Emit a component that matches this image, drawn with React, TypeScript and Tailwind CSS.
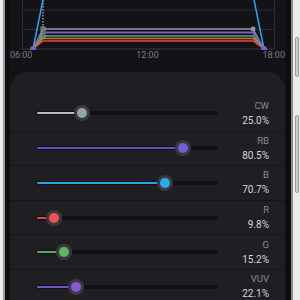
import React from 'react'

type Channel = { name: string; value: number; color: string; fill: string }

const channels: Channel[] = [
  { name: 'CW', value: 25.0, color: '#8fa4ae', fill: '#b4bec2' },
  { name: 'RB', value: 80.5, color: '#6d5fd6', fill: '#5c50c8' },
  { name: 'B', value: 70.7, color: '#2aa8f0', fill: '#2aa2e6' },
  { name: 'R', value: 9.8, color: '#ef5350', fill: '#e0453f' },
  { name: 'G', value: 15.2, color: '#5cb860', fill: '#55ad59' },
  { name: 'VUV', value: 22.1, color: '#8658d6', fill: '#7a52c8' },
]

const Chart = () => {
  const flat = [
    { y: 29, c: '#8a969c', w: 1.5 },
    { y: 32.5, c: '#7b5bd6', w: 2 },
    { y: 36, c: '#57b35a', w: 1.5 },
    { y: 38.5, c: '#e0673a', w: 1.5 },
    { y: 41, c: '#e5483f', w: 1.5 },
  ]
  return (
    <svg width="277" height="50" viewBox="0 0 277 50" className="block">
      <line x1="13" y1="10" x2="265" y2="10" stroke="#2c2b30" strokeWidth="1" />
      <line x1="13" y1="29.5" x2="265" y2="29.5" stroke="#2c2b30" strokeWidth="1" />
      <line x1="13" y1="49" x2="265" y2="49" stroke="#3a393e" strokeWidth="1" />
      <line x1="13.5" y1="0" x2="13.5" y2="49" stroke="#2c2b30" strokeWidth="1" />
      <line x1="265.5" y1="0" x2="265.5" y2="49" stroke="#2c2b30" strokeWidth="1" />
      {flat.map((l) => (
        <polyline
          key={l.c}
          points={`24,49 34,${l.y} 244,${l.y} 255,49`}
          fill="none"
          stroke={l.c}
          strokeWidth={l.w}
        />
      ))}
      <line x1="34" y1="0" x2="34" y2="29" stroke="#7a7290" strokeWidth="2" strokeDasharray="1.5 1.5" />
      <rect x="32" y="27" width="4" height="4" fill="none" stroke="#8a969c" strokeWidth="1" />
      <rect x="32" y="34" width="4" height="4" fill="none" stroke="#57b35a" strokeWidth="1" />
      <circle cx="244" cy="29" r="2.5" fill="#8a969c" />
      <polyline points="24,49 37,-15 242,-15 255,49" fill="none" stroke="#2aa8f0" strokeWidth="1.5" />
      <circle cx="24" cy="49" r="3" fill="#7b5bd6" />
      <circle cx="255" cy="49" r="3" fill="#7b5bd6" />
    </svg>
  )
}

const Slider = ({ ch }: { ch: Channel }) => {
  return (
    <div className="relative w-[182px] h-[4px] rounded-full bg-[#111013] flex items-center px-px">
      <div className="h-[2px] rounded-full" style={{ width: `${ch.value}%`, backgroundColor: ch.fill }} />
      <div
        className="absolute top-1/2 -translate-x-1/2 -translate-y-1/2 w-[16px] h-[16px] rounded-full bg-[#3a393e] flex items-center justify-center"
        style={{ left: `${ch.value}%` }}
      >
        <div className="w-[10px] h-[10px] rounded-full" style={{ backgroundColor: ch.color }} />
      </div>
    </div>
  )
}

const App = () => {
  return (
    <div
      className="w-[300px] h-[300px] overflow-hidden flex bg-[#ececec]"
      style={{ fontFamily: 'Roboto, "Noto Sans", sans-serif' }}
    >
      <div className="w-[3px] bg-[#ececec]" />
      <div className="w-[2px] bg-[#9c9c9c]" />
      <div className="w-[4px] bg-[#0d0d0f]" />

      <div className="w-[277px] bg-[#131216] flex flex-col">
        <div className="h-[72px] shrink-0 flex flex-col">
          <Chart />
          <div className="flex justify-between px-[1px] text-[9px] leading-[11px] text-[#7c7b80]">
            <span>06:00</span>
            <span>12:00</span>
            <span>18:00</span>
          </div>
        </div>

        <div className="mx-px flex-1 rounded-t-[18px] bg-[#1f1e23] pt-[24px]">
          {channels.map((ch, i) => (
            <div
              key={ch.name}
              className={`h-[34.6px] flex items-center pl-[26px] pr-[16px] ${i > 0 ? 'border-t border-[#151418]' : ''}`}
            >
              <Slider ch={ch} />
              <div className="ml-auto flex flex-col items-end">
                <span className="text-[9.5px] leading-[14px] text-[#8a898e]">{ch.name}</span>
                <span className="text-[10px] leading-[15px] text-[#d6d5da]">{ch.value.toFixed(1)}%</span>
              </div>
            </div>
          ))}
        </div>
      </div>

      <div className="w-[5px] bg-[#0d0d0f]" />
      <div className="w-[2px] bg-[#8c8c8c]" />
      <div className="w-[7px] bg-[#ececec] flex flex-col items-center">
        <div className="mt-[37px] h-[40px] w-[4px] rounded-sm bg-[#cfcfcf] border border-[#9a9a9a]" />
        <div className="mt-[38px] h-[78px] w-[4px] rounded-sm bg-[#cfcfcf] border border-[#9a9a9a]" />
      </div>
    </div>
  )
}

export default App
